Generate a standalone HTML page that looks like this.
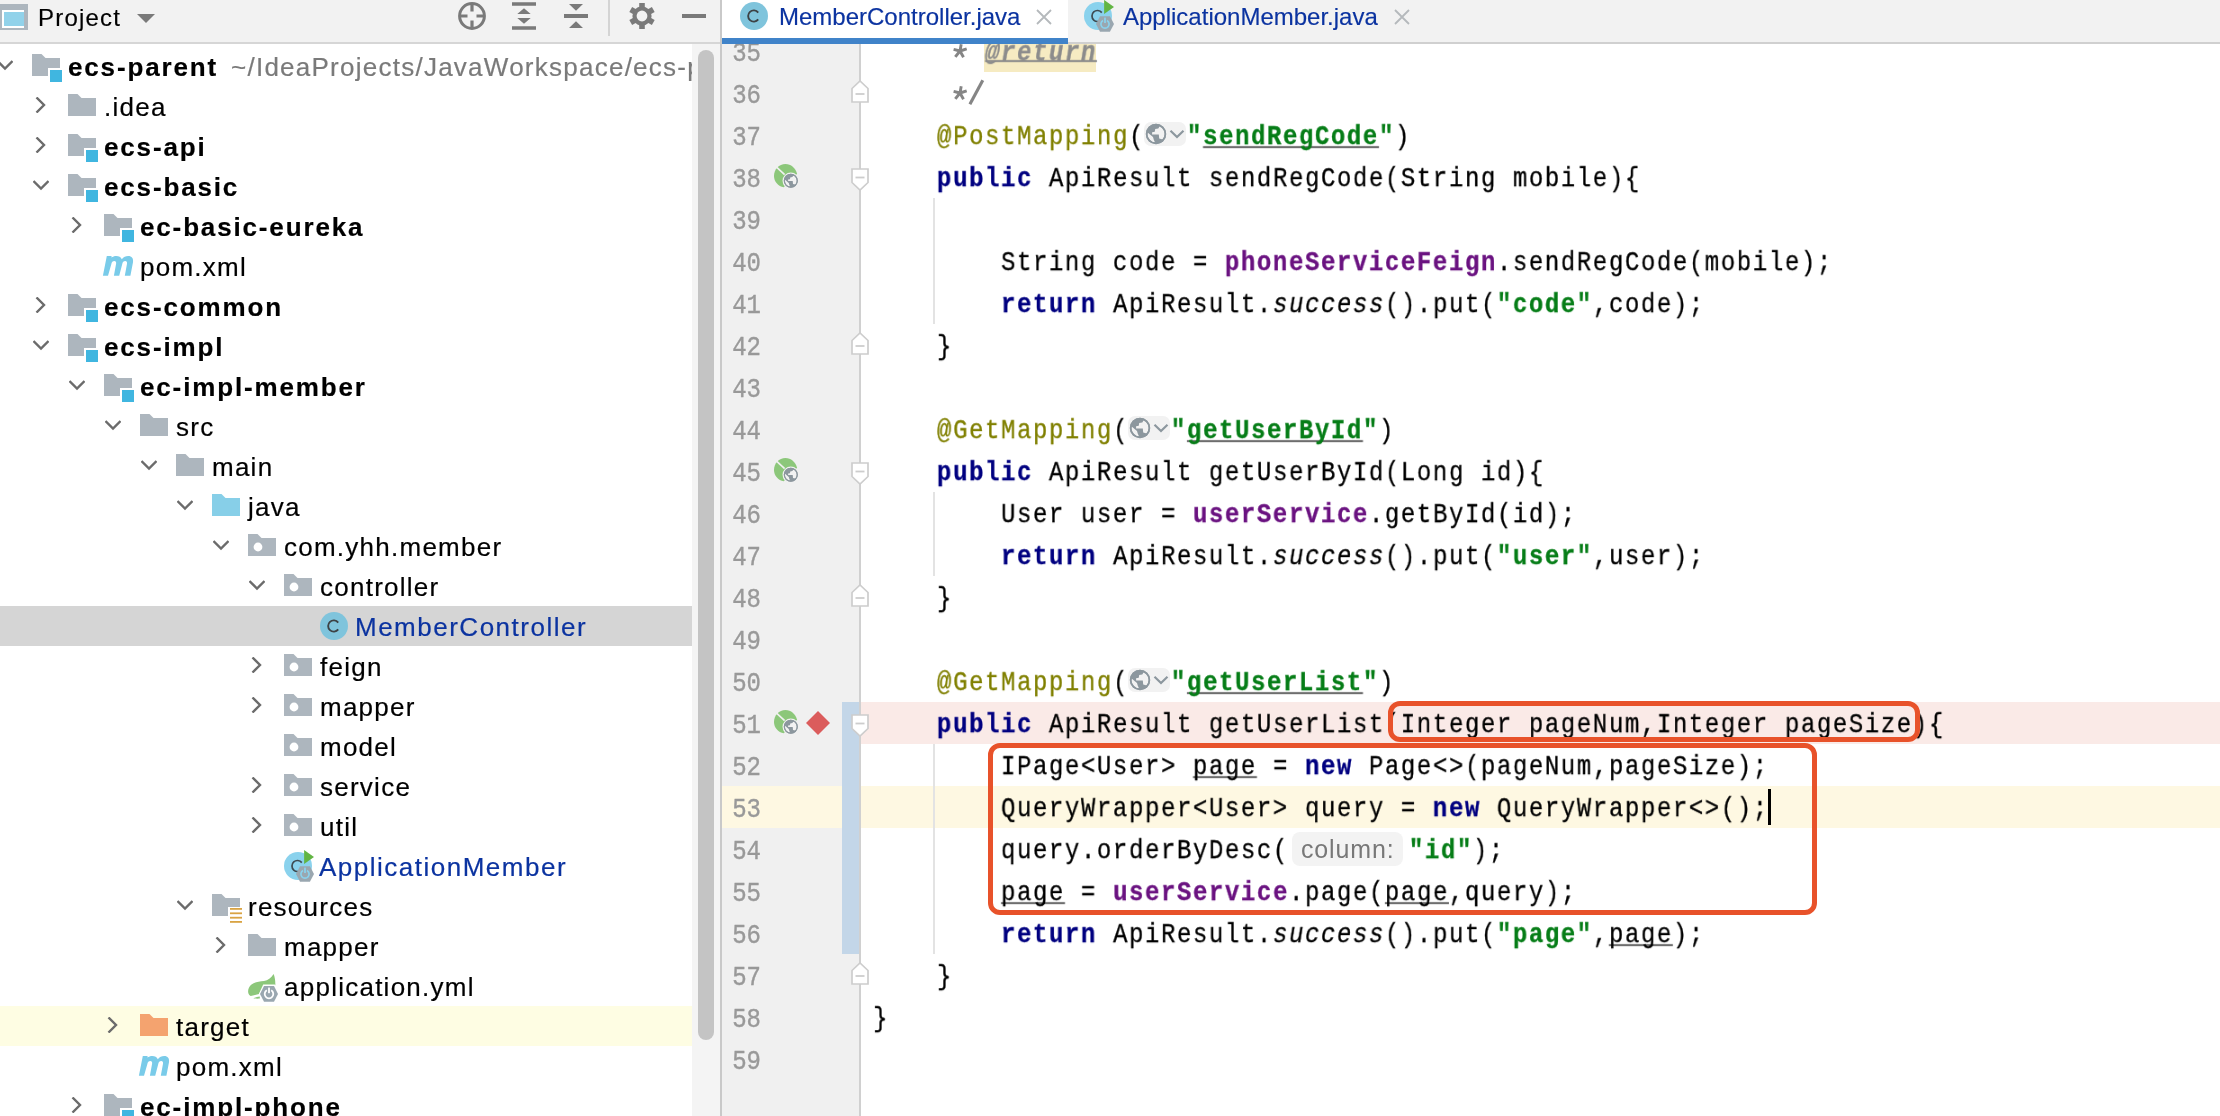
<!DOCTYPE html>
<html><head><meta charset="utf-8"><style>
html,body{margin:0;padding:0;width:2220px;height:1116px;overflow:hidden;background:#fff}
body{position:relative;font-family:"Liberation Sans",sans-serif}
b{font-weight:bold}
</style></head><body>

<svg width="0" height="0" style="position:absolute">
<defs>
<symbol id="folder" viewBox="0 0 28 28"><path d="M0 2H9.5L13.5 6H28V24H0Z" fill="#adb6be"/></symbol>
<symbol id="module" viewBox="0 0 28 28" overflow="visible"><path d="M0 2H9.5L13.5 6H28V16H16V24H0Z" fill="#adb6be"/><rect x="18" y="18" width="12" height="12" fill="#40b6e0"/></symbol>
<symbol id="pkg" viewBox="0 0 28 28"><path d="M0 2H9.5L13.5 6H28V24H0Z" fill="#adb6be"/><circle cx="10" cy="15" r="4.4" fill="#fff"/></symbol>
<symbol id="srcf" viewBox="0 0 28 28"><path d="M0 2H9.5L13.5 6H28V24H0Z" fill="#87cfe8"/></symbol>
<symbol id="tgt" viewBox="0 0 28 28"><path d="M0 2H9.5L13.5 6H28V24H0Z" fill="#f4a36f"/></symbol>
<symbol id="res" viewBox="0 0 28 28" overflow="visible"><path d="M0 2H9.5L13.5 6H28V15H16V24H0Z" fill="#adb6be"/><g fill="#d9a343"><rect x="18" y="16" width="12" height="1.8"/><rect x="18" y="20.4" width="12" height="1.8"/><rect x="18" y="24.8" width="12" height="1.8"/><rect x="18" y="29" width="12" height="1.8"/></g></symbol>
<symbol id="pom" viewBox="0 0 28 28" overflow="visible"><path d="M-1.1 23.8L2.8 4H7.6L7.4 5.6C8.8 4.6 10.4 4 12.2 4C15 4 16.8 5 17.8 7.2C19.6 5 21.6 4 24.2 4C27.8 4 29.6 6.4 29 10.2L26.4 23.8H20.8L23 11.8C23.3 10 22.6 9 21.2 9C19.6 9 18.6 10.2 18.2 12.2L15.2 23.8H9.9L12.1 11.8C12.4 10 11.7 9 10.3 9C8.7 9 7.7 10.2 7.3 12.2L4 23.8Z" fill="#79cbe9"/></symbol>
<symbol id="cls" viewBox="0 0 28 28"><circle cx="14" cy="14" r="14" fill="#7fc4dc"/><path d="M18.2 10.6A5.6 5.6 0 1 0 18.2 17.4" fill="none" stroke="#3d4245" stroke-width="1.9"/></symbol>
<symbol id="app" viewBox="0 0 28 28" overflow="visible"><circle cx="14" cy="14" r="14" fill="#8ad2ed"/><path d="M17.8 10.6A5.5 5.5 0 1 0 17.8 17.4" fill="none" stroke="#3e4b52" stroke-width="1.7"/><path d="M20.1 -2.1L30 5.1L20.1 11.9Z" fill="#62b543"/><path d="M16 14.2H25.9L30 22L25.9 29.8H16L12 22Z" fill="#9aa7b0"/><path d="M19 18.5A4.1 4.1 0 1 0 23 18.5" fill="none" stroke="#8ad2ed" stroke-width="1.7"/><rect x="20.1" y="15.6" width="1.8" height="5.4" fill="#8ad2ed"/></symbol>
<symbol id="yml" viewBox="0 0 28 28" overflow="visible"><path d="M25.6 2.1C23 6 20 8.6 16 9C11 9.6 6.7 10 3.5 12.5C0.8 14.6 -0.2 17.6 0.2 20.6C0.5 22.5 1.5 23.8 2.8 24.1L11 22L16 13.5L27.3 13.3C27.5 9 26.8 5 25.6 2.1Z" fill="#8cc77a"/><path d="M5.3 26.2C7.5 25.2 9.5 24.6 11.8 24.4L11.8 26.6C9.6 26.8 7.4 26.7 5.3 26.2Z" fill="#8cc77a"/><path d="M15.2 12.6H26.8L31.2 22L26.8 31.2H15.2L10.8 22Z" fill="#fff"/><path d="M16 14H26L30 22L26 29.8H16L12 22Z" fill="#9aa7b0"/><path d="M18.8 18.3A4.3 4.3 0 1 0 23.2 18.3" fill="none" stroke="#fff" stroke-width="1.8"/><rect x="20.1" y="15.6" width="1.8" height="5.6" fill="#fff"/></symbol>
<symbol id="chevR" viewBox="0 0 16 16"><path d="M4.5 0.5L12 8L4.5 15.5" fill="none" stroke="#6b6b6b" stroke-width="2.4"/></symbol>
<symbol id="chevD" viewBox="0 0 16 16"><path d="M0.5 4L8 11.5L15.5 4" fill="none" stroke="#6b6b6b" stroke-width="2.4"/></symbol>
<symbol id="spring" viewBox="0 0 24 24" overflow="visible"><path d="M23.1 9.8C21.5 4 17 0 11.5 0C5 0 0 5.4 0 12C0 17.6 4 22.3 9.8 23.3L16.8 16.8Z" fill="#8cc77a"/><path d="M2.3 2.8L10.6 10.6" stroke="#f0f0f0" stroke-width="1.7"/><circle cx="16.8" cy="16.8" r="8.3" fill="#f0f0f0"/><use href="#globe" x="8.55" y="8.55" width="16.5" height="16.5"/></symbol>
<clipPath id="gclip"><circle cx="0" cy="0" r="8.6"/></clipPath>
<symbol id="globe" viewBox="0 0 24 24"><circle cx="12" cy="12" r="10.2" fill="#8c979e"/><g clip-path="url(#gclip)" fill="#f2f2f2" transform="translate(12 12)"><path d="M3.8 -10L12 -10L12 5.8L6.8 5.4L3.2 4.6L2.8 0.45L-3.9 0.45L-3.9 -1.8L-1.25 -2.2L-0.8 -4.9L2.3 -5.4L3.5 -7.4Z"/><path d="M-8.4 -1.6L-3 3.1L-2.2 5.8L-0.8 8.8L-5.7 8.2L-9.5 3.1Z"/></g><circle cx="12" cy="12" r="9.4" fill="none" stroke="#8c979e" stroke-width="1.6"/></symbol>
</defs>
</svg>

<div style="position:absolute;left:0;top:0;width:720px;height:1116px;background:#fff;overflow:hidden"><div style="position:absolute;left:0;top:606px;width:692px;height:40px;background:#d5d5d5"></div><div style="position:absolute;left:0;top:1006px;width:692px;height:40px;background:#fefde3"></div><svg style="position:absolute;left:-3.5px;top:57px;overflow:visible" width="16" height="16"><use href="#chevD" width="16" height="16"/></svg><svg style="position:absolute;left:32px;top:52px;overflow:visible" width="28" height="28"><use href="#module" width="28" height="28"/></svg><div style="position:absolute;left:69px;top:47px;height:40px;line-height:40px;font-size:26px;white-space:nowrap;will-change:transform;-webkit-text-stroke-width:0.2px;font-weight:bold;color:#000;letter-spacing:1.85px;margin-left:-1px">ecs-parent<span style="font-weight:normal;color:#7a7a7a;letter-spacing:1.25px;margin-left:13px">~/IdeaProjects/JavaWorkspace/ecs-parent</span></div><svg style="position:absolute;left:31.5px;top:97px;overflow:visible" width="16" height="16"><use href="#chevR" width="16" height="16"/></svg><svg style="position:absolute;left:68px;top:92px;overflow:visible" width="28" height="28"><use href="#folder" width="28" height="28"/></svg><div style="position:absolute;left:105px;top:87px;height:40px;line-height:40px;font-size:26px;white-space:nowrap;will-change:transform;-webkit-text-stroke-width:0.2px;color:#000;letter-spacing:1.25px;margin-left:-1px">.idea</div><svg style="position:absolute;left:31.5px;top:137px;overflow:visible" width="16" height="16"><use href="#chevR" width="16" height="16"/></svg><svg style="position:absolute;left:68px;top:132px;overflow:visible" width="28" height="28"><use href="#module" width="28" height="28"/></svg><div style="position:absolute;left:105px;top:127px;height:40px;line-height:40px;font-size:26px;white-space:nowrap;will-change:transform;-webkit-text-stroke-width:0.2px;font-weight:bold;color:#000;letter-spacing:1.85px;margin-left:-1px">ecs-api</div><svg style="position:absolute;left:32.5px;top:177px;overflow:visible" width="16" height="16"><use href="#chevD" width="16" height="16"/></svg><svg style="position:absolute;left:68px;top:172px;overflow:visible" width="28" height="28"><use href="#module" width="28" height="28"/></svg><div style="position:absolute;left:105px;top:167px;height:40px;line-height:40px;font-size:26px;white-space:nowrap;will-change:transform;-webkit-text-stroke-width:0.2px;font-weight:bold;color:#000;letter-spacing:1.85px;margin-left:-1px">ecs-basic</div><svg style="position:absolute;left:67.5px;top:217px;overflow:visible" width="16" height="16"><use href="#chevR" width="16" height="16"/></svg><svg style="position:absolute;left:104px;top:212px;overflow:visible" width="28" height="28"><use href="#module" width="28" height="28"/></svg><div style="position:absolute;left:141px;top:207px;height:40px;line-height:40px;font-size:26px;white-space:nowrap;will-change:transform;-webkit-text-stroke-width:0.2px;font-weight:bold;color:#000;letter-spacing:1.85px;margin-left:-1px">ec-basic-eureka</div><svg style="position:absolute;left:104px;top:252px;overflow:visible" width="28" height="28"><use href="#pom" width="28" height="28"/></svg><div style="position:absolute;left:141px;top:247px;height:40px;line-height:40px;font-size:26px;white-space:nowrap;will-change:transform;-webkit-text-stroke-width:0.2px;color:#000;letter-spacing:1.25px;margin-left:-1px">pom.xml</div><svg style="position:absolute;left:31.5px;top:297px;overflow:visible" width="16" height="16"><use href="#chevR" width="16" height="16"/></svg><svg style="position:absolute;left:68px;top:292px;overflow:visible" width="28" height="28"><use href="#module" width="28" height="28"/></svg><div style="position:absolute;left:105px;top:287px;height:40px;line-height:40px;font-size:26px;white-space:nowrap;will-change:transform;-webkit-text-stroke-width:0.2px;font-weight:bold;color:#000;letter-spacing:1.85px;margin-left:-1px">ecs-common</div><svg style="position:absolute;left:32.5px;top:337px;overflow:visible" width="16" height="16"><use href="#chevD" width="16" height="16"/></svg><svg style="position:absolute;left:68px;top:332px;overflow:visible" width="28" height="28"><use href="#module" width="28" height="28"/></svg><div style="position:absolute;left:105px;top:327px;height:40px;line-height:40px;font-size:26px;white-space:nowrap;will-change:transform;-webkit-text-stroke-width:0.2px;font-weight:bold;color:#000;letter-spacing:1.85px;margin-left:-1px">ecs-impl</div><svg style="position:absolute;left:68.5px;top:377px;overflow:visible" width="16" height="16"><use href="#chevD" width="16" height="16"/></svg><svg style="position:absolute;left:104px;top:372px;overflow:visible" width="28" height="28"><use href="#module" width="28" height="28"/></svg><div style="position:absolute;left:141px;top:367px;height:40px;line-height:40px;font-size:26px;white-space:nowrap;will-change:transform;-webkit-text-stroke-width:0.2px;font-weight:bold;color:#000;letter-spacing:1.85px;margin-left:-1px">ec-impl-member</div><svg style="position:absolute;left:104.5px;top:417px;overflow:visible" width="16" height="16"><use href="#chevD" width="16" height="16"/></svg><svg style="position:absolute;left:140px;top:412px;overflow:visible" width="28" height="28"><use href="#folder" width="28" height="28"/></svg><div style="position:absolute;left:177px;top:407px;height:40px;line-height:40px;font-size:26px;white-space:nowrap;will-change:transform;-webkit-text-stroke-width:0.2px;color:#000;letter-spacing:1.25px;margin-left:-1px">src</div><svg style="position:absolute;left:140.5px;top:457px;overflow:visible" width="16" height="16"><use href="#chevD" width="16" height="16"/></svg><svg style="position:absolute;left:176px;top:452px;overflow:visible" width="28" height="28"><use href="#folder" width="28" height="28"/></svg><div style="position:absolute;left:213px;top:447px;height:40px;line-height:40px;font-size:26px;white-space:nowrap;will-change:transform;-webkit-text-stroke-width:0.2px;color:#000;letter-spacing:1.25px;margin-left:-1px">main</div><svg style="position:absolute;left:176.5px;top:497px;overflow:visible" width="16" height="16"><use href="#chevD" width="16" height="16"/></svg><svg style="position:absolute;left:212px;top:492px;overflow:visible" width="28" height="28"><use href="#srcf" width="28" height="28"/></svg><div style="position:absolute;left:249px;top:487px;height:40px;line-height:40px;font-size:26px;white-space:nowrap;will-change:transform;-webkit-text-stroke-width:0.2px;color:#000;letter-spacing:1.25px;margin-left:-1px">java</div><svg style="position:absolute;left:212.5px;top:537px;overflow:visible" width="16" height="16"><use href="#chevD" width="16" height="16"/></svg><svg style="position:absolute;left:248px;top:532px;overflow:visible" width="28" height="28"><use href="#pkg" width="28" height="28"/></svg><div style="position:absolute;left:285px;top:527px;height:40px;line-height:40px;font-size:26px;white-space:nowrap;will-change:transform;-webkit-text-stroke-width:0.2px;color:#000;letter-spacing:1.25px;margin-left:-1px">com.yhh.member</div><svg style="position:absolute;left:248.5px;top:577px;overflow:visible" width="16" height="16"><use href="#chevD" width="16" height="16"/></svg><svg style="position:absolute;left:284px;top:572px;overflow:visible" width="28" height="28"><use href="#pkg" width="28" height="28"/></svg><div style="position:absolute;left:321px;top:567px;height:40px;line-height:40px;font-size:26px;white-space:nowrap;will-change:transform;-webkit-text-stroke-width:0.2px;color:#000;letter-spacing:1.25px;margin-left:-1px">controller</div><svg style="position:absolute;left:320px;top:612px;overflow:visible" width="28" height="28"><use href="#cls" width="28" height="28"/></svg><div style="position:absolute;left:357px;top:607px;height:40px;line-height:40px;font-size:26px;white-space:nowrap;will-change:transform;-webkit-text-stroke-width:0.2px;color:#0b33a0;letter-spacing:1.5px;margin-left:-2px">MemberController</div><svg style="position:absolute;left:247.5px;top:657px;overflow:visible" width="16" height="16"><use href="#chevR" width="16" height="16"/></svg><svg style="position:absolute;left:284px;top:652px;overflow:visible" width="28" height="28"><use href="#pkg" width="28" height="28"/></svg><div style="position:absolute;left:321px;top:647px;height:40px;line-height:40px;font-size:26px;white-space:nowrap;will-change:transform;-webkit-text-stroke-width:0.2px;color:#000;letter-spacing:1.25px;margin-left:-1px">feign</div><svg style="position:absolute;left:247.5px;top:697px;overflow:visible" width="16" height="16"><use href="#chevR" width="16" height="16"/></svg><svg style="position:absolute;left:284px;top:692px;overflow:visible" width="28" height="28"><use href="#pkg" width="28" height="28"/></svg><div style="position:absolute;left:321px;top:687px;height:40px;line-height:40px;font-size:26px;white-space:nowrap;will-change:transform;-webkit-text-stroke-width:0.2px;color:#000;letter-spacing:1.25px;margin-left:-1px">mapper</div><svg style="position:absolute;left:284px;top:732px;overflow:visible" width="28" height="28"><use href="#pkg" width="28" height="28"/></svg><div style="position:absolute;left:321px;top:727px;height:40px;line-height:40px;font-size:26px;white-space:nowrap;will-change:transform;-webkit-text-stroke-width:0.2px;color:#000;letter-spacing:1.25px;margin-left:-1px">model</div><svg style="position:absolute;left:247.5px;top:777px;overflow:visible" width="16" height="16"><use href="#chevR" width="16" height="16"/></svg><svg style="position:absolute;left:284px;top:772px;overflow:visible" width="28" height="28"><use href="#pkg" width="28" height="28"/></svg><div style="position:absolute;left:321px;top:767px;height:40px;line-height:40px;font-size:26px;white-space:nowrap;will-change:transform;-webkit-text-stroke-width:0.2px;color:#000;letter-spacing:1.25px;margin-left:-1px">service</div><svg style="position:absolute;left:247.5px;top:817px;overflow:visible" width="16" height="16"><use href="#chevR" width="16" height="16"/></svg><svg style="position:absolute;left:284px;top:812px;overflow:visible" width="28" height="28"><use href="#pkg" width="28" height="28"/></svg><div style="position:absolute;left:321px;top:807px;height:40px;line-height:40px;font-size:26px;white-space:nowrap;will-change:transform;-webkit-text-stroke-width:0.2px;color:#000;letter-spacing:1.25px;margin-left:-1px">util</div><svg style="position:absolute;left:284px;top:852px;overflow:visible" width="28" height="28"><use href="#app" width="28" height="28"/></svg><div style="position:absolute;left:321px;top:847px;height:40px;line-height:40px;font-size:26px;white-space:nowrap;will-change:transform;-webkit-text-stroke-width:0.2px;color:#0b33a0;letter-spacing:1.5px;margin-left:-2px">ApplicationMember</div><svg style="position:absolute;left:176.5px;top:897px;overflow:visible" width="16" height="16"><use href="#chevD" width="16" height="16"/></svg><svg style="position:absolute;left:212px;top:892px;overflow:visible" width="28" height="28"><use href="#res" width="28" height="28"/></svg><div style="position:absolute;left:249px;top:887px;height:40px;line-height:40px;font-size:26px;white-space:nowrap;will-change:transform;-webkit-text-stroke-width:0.2px;color:#000;letter-spacing:1.25px;margin-left:-1px">resources</div><svg style="position:absolute;left:211.5px;top:937px;overflow:visible" width="16" height="16"><use href="#chevR" width="16" height="16"/></svg><svg style="position:absolute;left:248px;top:932px;overflow:visible" width="28" height="28"><use href="#folder" width="28" height="28"/></svg><div style="position:absolute;left:285px;top:927px;height:40px;line-height:40px;font-size:26px;white-space:nowrap;will-change:transform;-webkit-text-stroke-width:0.2px;color:#000;letter-spacing:1.25px;margin-left:-1px">mapper</div><svg style="position:absolute;left:248px;top:972px;overflow:visible" width="28" height="28"><use href="#yml" width="28" height="28"/></svg><div style="position:absolute;left:285px;top:967px;height:40px;line-height:40px;font-size:26px;white-space:nowrap;will-change:transform;-webkit-text-stroke-width:0.2px;color:#000;letter-spacing:1.25px;margin-left:-1px">application.yml</div><svg style="position:absolute;left:103.5px;top:1017px;overflow:visible" width="16" height="16"><use href="#chevR" width="16" height="16"/></svg><svg style="position:absolute;left:140px;top:1012px;overflow:visible" width="28" height="28"><use href="#tgt" width="28" height="28"/></svg><div style="position:absolute;left:177px;top:1007px;height:40px;line-height:40px;font-size:26px;white-space:nowrap;will-change:transform;-webkit-text-stroke-width:0.2px;color:#000;letter-spacing:1.25px;margin-left:-1px">target</div><svg style="position:absolute;left:140px;top:1052px;overflow:visible" width="28" height="28"><use href="#pom" width="28" height="28"/></svg><div style="position:absolute;left:177px;top:1047px;height:40px;line-height:40px;font-size:26px;white-space:nowrap;will-change:transform;-webkit-text-stroke-width:0.2px;color:#000;letter-spacing:1.25px;margin-left:-1px">pom.xml</div><svg style="position:absolute;left:67.5px;top:1097px;overflow:visible" width="16" height="16"><use href="#chevR" width="16" height="16"/></svg><svg style="position:absolute;left:104px;top:1092px;overflow:visible" width="28" height="28"><use href="#module" width="28" height="28"/></svg><div style="position:absolute;left:141px;top:1087px;height:40px;line-height:40px;font-size:26px;white-space:nowrap;will-change:transform;-webkit-text-stroke-width:0.2px;font-weight:bold;color:#000;letter-spacing:1.85px;margin-left:-1px">ec-impl-phone</div><div style="position:absolute;left:692px;top:44px;width:28px;height:1072px;background:#f4f4f4"></div><div style="position:absolute;left:698px;top:50px;width:16px;height:990px;background:#c4c4c4;border-radius:8px"></div><div style="position:absolute;left:0;top:0;width:720px;height:42px;background:#f2f2f2;border-bottom:2px solid #d6d6d6"></div><div style="position:absolute;left:0;top:4px;width:28px;height:26px;background:#adb6be"></div><div style="position:absolute;left:2px;top:10px;width:22px;height:18px;background:#fff"></div><div style="position:absolute;left:4px;top:12px;width:20px;height:14px;background:#91d2ea"></div><div style="position:absolute;left:38px;top:0;height:36px;line-height:36px;font-size:24px;color:#000;letter-spacing:1.2px;will-change:transform;-webkit-text-stroke-width:0.15px">Project</div><svg style="position:absolute;left:0;top:0" width="720" height="42"><path d="M137 14H155L146 23Z" fill="#7a7a7a"/><circle cx="472" cy="16" r="12.4" fill="none" stroke="#7a7a7a" stroke-width="3"/><path d="M472 3V11.5M472 20.5V29M459 16H467.5M476.5 16H485" stroke="#7a7a7a" stroke-width="3.2"/><path d="M512 4H536M512 28H536" stroke="#7a7a7a" stroke-width="3.6"/><path d="M517.3 14H530.7L524 8.2Z M517.3 18H530.7L524 23.8Z" fill="#7a7a7a"/><path d="M564 16H588" stroke="#7a7a7a" stroke-width="4"/><path d="M569 4H583L576 10.8Z M569 28H583L576 21.2Z" fill="#7a7a7a"/><rect x="608" y="0" width="2" height="36" fill="#d4d4d4"/><g fill="#7a7a7a" transform="translate(642 16)"><rect x="-2.8" y="-13" width="5.6" height="26"/><rect x="-2.8" y="-13" width="5.6" height="26" transform="rotate(60)"/><rect x="-2.8" y="-13" width="5.6" height="26" transform="rotate(120)"/><circle r="9.6"/></g><circle cx="642" cy="16" r="5.4" fill="#f2f2f2"/><path d="M682 16H706" stroke="#7a7a7a" stroke-width="4"/></svg></div><div style="position:absolute;left:720px;top:0;width:2px;height:1116px;background:#c9c9c9"></div>
<div style="position:absolute;left:722px;top:0;width:1498px;height:1116px;background:#fff;overflow:hidden"><div style="position:absolute;left:0;top:0;width:138px;height:1116px;background:#f0f0f0"></div><div style="position:absolute;left:139px;top:702px;width:1400px;height:42px;background:#faeae7"></div><div style="position:absolute;left:139px;top:786px;width:1400px;height:42px;background:#fef8e2"></div><div style="position:absolute;left:0;top:786px;width:120px;height:42px;background:#fef8e2"></div><div style="position:absolute;left:120px;top:702px;width:18px;height:252px;background:#c3d6e8"></div><div style="position:absolute;left:137px;top:0;width:2px;height:1116px;background:#d0d0d0"></div><div style="position:absolute;left:0;top:34px;width:39px;height:42px;line-height:42px;text-align:right;font-family:'Liberation Mono';font-size:24px;color:#999999;transform:scaleY(1.14);transform-origin:0 28px;will-change:transform;-webkit-text-stroke-width:0.35px">35</div><div style="position:absolute;left:0;top:76px;width:39px;height:42px;line-height:42px;text-align:right;font-family:'Liberation Mono';font-size:24px;color:#999999;transform:scaleY(1.14);transform-origin:0 28px;will-change:transform;-webkit-text-stroke-width:0.35px">36</div><div style="position:absolute;left:0;top:118px;width:39px;height:42px;line-height:42px;text-align:right;font-family:'Liberation Mono';font-size:24px;color:#999999;transform:scaleY(1.14);transform-origin:0 28px;will-change:transform;-webkit-text-stroke-width:0.35px">37</div><div style="position:absolute;left:0;top:160px;width:39px;height:42px;line-height:42px;text-align:right;font-family:'Liberation Mono';font-size:24px;color:#999999;transform:scaleY(1.14);transform-origin:0 28px;will-change:transform;-webkit-text-stroke-width:0.35px">38</div><div style="position:absolute;left:0;top:202px;width:39px;height:42px;line-height:42px;text-align:right;font-family:'Liberation Mono';font-size:24px;color:#999999;transform:scaleY(1.14);transform-origin:0 28px;will-change:transform;-webkit-text-stroke-width:0.35px">39</div><div style="position:absolute;left:0;top:244px;width:39px;height:42px;line-height:42px;text-align:right;font-family:'Liberation Mono';font-size:24px;color:#999999;transform:scaleY(1.14);transform-origin:0 28px;will-change:transform;-webkit-text-stroke-width:0.35px">40</div><div style="position:absolute;left:0;top:286px;width:39px;height:42px;line-height:42px;text-align:right;font-family:'Liberation Mono';font-size:24px;color:#999999;transform:scaleY(1.14);transform-origin:0 28px;will-change:transform;-webkit-text-stroke-width:0.35px">41</div><div style="position:absolute;left:0;top:328px;width:39px;height:42px;line-height:42px;text-align:right;font-family:'Liberation Mono';font-size:24px;color:#999999;transform:scaleY(1.14);transform-origin:0 28px;will-change:transform;-webkit-text-stroke-width:0.35px">42</div><div style="position:absolute;left:0;top:370px;width:39px;height:42px;line-height:42px;text-align:right;font-family:'Liberation Mono';font-size:24px;color:#999999;transform:scaleY(1.14);transform-origin:0 28px;will-change:transform;-webkit-text-stroke-width:0.35px">43</div><div style="position:absolute;left:0;top:412px;width:39px;height:42px;line-height:42px;text-align:right;font-family:'Liberation Mono';font-size:24px;color:#999999;transform:scaleY(1.14);transform-origin:0 28px;will-change:transform;-webkit-text-stroke-width:0.35px">44</div><div style="position:absolute;left:0;top:454px;width:39px;height:42px;line-height:42px;text-align:right;font-family:'Liberation Mono';font-size:24px;color:#999999;transform:scaleY(1.14);transform-origin:0 28px;will-change:transform;-webkit-text-stroke-width:0.35px">45</div><div style="position:absolute;left:0;top:496px;width:39px;height:42px;line-height:42px;text-align:right;font-family:'Liberation Mono';font-size:24px;color:#999999;transform:scaleY(1.14);transform-origin:0 28px;will-change:transform;-webkit-text-stroke-width:0.35px">46</div><div style="position:absolute;left:0;top:538px;width:39px;height:42px;line-height:42px;text-align:right;font-family:'Liberation Mono';font-size:24px;color:#999999;transform:scaleY(1.14);transform-origin:0 28px;will-change:transform;-webkit-text-stroke-width:0.35px">47</div><div style="position:absolute;left:0;top:580px;width:39px;height:42px;line-height:42px;text-align:right;font-family:'Liberation Mono';font-size:24px;color:#999999;transform:scaleY(1.14);transform-origin:0 28px;will-change:transform;-webkit-text-stroke-width:0.35px">48</div><div style="position:absolute;left:0;top:622px;width:39px;height:42px;line-height:42px;text-align:right;font-family:'Liberation Mono';font-size:24px;color:#999999;transform:scaleY(1.14);transform-origin:0 28px;will-change:transform;-webkit-text-stroke-width:0.35px">49</div><div style="position:absolute;left:0;top:664px;width:39px;height:42px;line-height:42px;text-align:right;font-family:'Liberation Mono';font-size:24px;color:#999999;transform:scaleY(1.14);transform-origin:0 28px;will-change:transform;-webkit-text-stroke-width:0.35px">50</div><div style="position:absolute;left:0;top:706px;width:39px;height:42px;line-height:42px;text-align:right;font-family:'Liberation Mono';font-size:24px;color:#999999;transform:scaleY(1.14);transform-origin:0 28px;will-change:transform;-webkit-text-stroke-width:0.35px">51</div><div style="position:absolute;left:0;top:748px;width:39px;height:42px;line-height:42px;text-align:right;font-family:'Liberation Mono';font-size:24px;color:#999999;transform:scaleY(1.14);transform-origin:0 28px;will-change:transform;-webkit-text-stroke-width:0.35px">52</div><div style="position:absolute;left:0;top:790px;width:39px;height:42px;line-height:42px;text-align:right;font-family:'Liberation Mono';font-size:24px;color:#999999;transform:scaleY(1.14);transform-origin:0 28px;will-change:transform;-webkit-text-stroke-width:0.35px">53</div><div style="position:absolute;left:0;top:832px;width:39px;height:42px;line-height:42px;text-align:right;font-family:'Liberation Mono';font-size:24px;color:#999999;transform:scaleY(1.14);transform-origin:0 28px;will-change:transform;-webkit-text-stroke-width:0.35px">54</div><div style="position:absolute;left:0;top:874px;width:39px;height:42px;line-height:42px;text-align:right;font-family:'Liberation Mono';font-size:24px;color:#999999;transform:scaleY(1.14);transform-origin:0 28px;will-change:transform;-webkit-text-stroke-width:0.35px">55</div><div style="position:absolute;left:0;top:916px;width:39px;height:42px;line-height:42px;text-align:right;font-family:'Liberation Mono';font-size:24px;color:#999999;transform:scaleY(1.14);transform-origin:0 28px;will-change:transform;-webkit-text-stroke-width:0.35px">56</div><div style="position:absolute;left:0;top:958px;width:39px;height:42px;line-height:42px;text-align:right;font-family:'Liberation Mono';font-size:24px;color:#999999;transform:scaleY(1.14);transform-origin:0 28px;will-change:transform;-webkit-text-stroke-width:0.35px">57</div><div style="position:absolute;left:0;top:1000px;width:39px;height:42px;line-height:42px;text-align:right;font-family:'Liberation Mono';font-size:24px;color:#999999;transform:scaleY(1.14);transform-origin:0 28px;will-change:transform;-webkit-text-stroke-width:0.35px">58</div><div style="position:absolute;left:0;top:1042px;width:39px;height:42px;line-height:42px;text-align:right;font-family:'Liberation Mono';font-size:24px;color:#999999;transform:scaleY(1.14);transform-origin:0 28px;will-change:transform;-webkit-text-stroke-width:0.35px">59</div><div style="position:absolute;left:262px;top:30px;width:112px;height:42px;background:#f6ebc2"></div><div style="position:absolute;left:422px;top:122px;width:42px;height:24px;background:#f2f2f2;border-radius:7px"></div><svg style="position:absolute;left:422px;top:122px" width="42" height="24"><g transform="translate(12 12)"><use href="#globe" x="-12" y="-12" width="24" height="24"/></g><path d="M26.5 8.8L33 15L39.5 8.8" fill="none" stroke="#8c979e" stroke-width="2.2"/></svg><div style="position:absolute;left:406px;top:416px;width:42px;height:24px;background:#f2f2f2;border-radius:7px"></div><svg style="position:absolute;left:406px;top:416px" width="42" height="24"><g transform="translate(12 12)"><use href="#globe" x="-12" y="-12" width="24" height="24"/></g><path d="M26.5 8.8L33 15L39.5 8.8" fill="none" stroke="#8c979e" stroke-width="2.2"/></svg><div style="position:absolute;left:406px;top:668px;width:42px;height:24px;background:#f2f2f2;border-radius:7px"></div><svg style="position:absolute;left:406px;top:668px" width="42" height="24"><g transform="translate(12 12)"><use href="#globe" x="-12" y="-12" width="24" height="24"/></g><path d="M26.5 8.8L33 15L39.5 8.8" fill="none" stroke="#8c979e" stroke-width="2.2"/></svg><div style="position:absolute;left:570px;top:832px;width:111px;height:34px;background:#f3f3f3;border-radius:8px"></div><div style="position:absolute;left:579px;top:832px;height:34px;line-height:34px;font-family:'Liberation Sans';font-size:25px;letter-spacing:0.85px;color:#787878;will-change:transform">column:</div><svg style="position:absolute;left:238px;top:76px" width="30" height="34"><path d="M22.8 4.2L9.9 28.3" stroke="#858585" stroke-width="3.1"/></svg><svg style="position:absolute;left:227.79999999999995px;top:40.5px" width="20" height="20"><g transform="translate(10 10)" stroke="#858585" stroke-width="2.9" stroke-linecap="butt" fill="none"><path d="M0 0L1.2 -6.8M0 0L-6.4 -1.6M0 0L6.7 -2.1M0 0L-4.7 5.9M0 0L3.5 6.2"/></g></svg><svg style="position:absolute;left:227.79999999999995px;top:82.5px" width="20" height="20"><g transform="translate(10 10)" stroke="#858585" stroke-width="2.9" stroke-linecap="butt" fill="none"><path d="M0 0L1.2 -6.8M0 0L-6.4 -1.6M0 0L6.7 -2.1M0 0L-4.7 5.9M0 0L3.5 6.2"/></g></svg><div style="position:absolute;left:211px;top:198px;width:2px;height:126px;background:#e3e3e3"></div><div style="position:absolute;left:211px;top:492px;width:2px;height:84px;background:#e3e3e3"></div><div style="position:absolute;left:211px;top:744px;width:2px;height:210px;background:#e3e3e3"></div><div style="position:absolute;left:150.79999999999995px;top:32px;height:42px;line-height:42px;font-family:'Liberation Mono';font-size:26.667px;letter-spacing:1.778px;color:#000;white-space:pre;transform:scale(0.9,1.03);transform-origin:0 28px;will-change:transform;-webkit-text-stroke-width:0.3px">     <i style="color:#8c8c8c">  <b style="text-decoration:underline;text-decoration-thickness:2px;text-underline-offset:0px;text-decoration-skip-ink:none">@return</b></i></div><div style="position:absolute;left:150.79999999999995px;top:74px;height:42px;line-height:42px;font-family:'Liberation Mono';font-size:26.667px;letter-spacing:1.778px;color:#000;white-space:pre;transform:scale(0.9,1.03);transform-origin:0 28px;will-change:transform;-webkit-text-stroke-width:0.3px"></div><div style="position:absolute;left:150.79999999999995px;top:116px;height:42px;line-height:42px;font-family:'Liberation Mono';font-size:26.667px;letter-spacing:1.778px;color:#000;white-space:pre;transform:scale(0.9,1.03);transform-origin:0 28px;will-change:transform;-webkit-text-stroke-width:0.3px">    <span style="color:#808000">@PostMapping</span>(<span style="display:inline-block;width:46.666666666666664px"></span><b style="color:#067d17">"<span style="text-decoration:underline;text-decoration-color:#6a6a6a;text-decoration-thickness:1.5px;text-underline-offset:2px;text-decoration-skip-ink:none">sendRegCode</span>"</b>)</div><div style="position:absolute;left:150.79999999999995px;top:158px;height:42px;line-height:42px;font-family:'Liberation Mono';font-size:26.667px;letter-spacing:1.778px;color:#000;white-space:pre;transform:scale(0.9,1.03);transform-origin:0 28px;will-change:transform;-webkit-text-stroke-width:0.3px">    <b style="color:#000080">public</b> ApiResult sendRegCode(String mobile){</div><div style="position:absolute;left:150.79999999999995px;top:200px;height:42px;line-height:42px;font-family:'Liberation Mono';font-size:26.667px;letter-spacing:1.778px;color:#000;white-space:pre;transform:scale(0.9,1.03);transform-origin:0 28px;will-change:transform;-webkit-text-stroke-width:0.3px"></div><div style="position:absolute;left:150.79999999999995px;top:242px;height:42px;line-height:42px;font-family:'Liberation Mono';font-size:26.667px;letter-spacing:1.778px;color:#000;white-space:pre;transform:scale(0.9,1.03);transform-origin:0 28px;will-change:transform;-webkit-text-stroke-width:0.3px">        String code = <b style="color:#6a1280">phoneServiceFeign</b>.sendRegCode(mobile);</div><div style="position:absolute;left:150.79999999999995px;top:284px;height:42px;line-height:42px;font-family:'Liberation Mono';font-size:26.667px;letter-spacing:1.778px;color:#000;white-space:pre;transform:scale(0.9,1.03);transform-origin:0 28px;will-change:transform;-webkit-text-stroke-width:0.3px">        <b style="color:#000080">return</b> ApiResult.<i>success</i>().put(<b style="color:#067d17">"code"</b>,code);</div><div style="position:absolute;left:150.79999999999995px;top:326px;height:42px;line-height:42px;font-family:'Liberation Mono';font-size:26.667px;letter-spacing:1.778px;color:#000;white-space:pre;transform:scale(0.9,1.03);transform-origin:0 28px;will-change:transform;-webkit-text-stroke-width:0.3px">    }</div><div style="position:absolute;left:150.79999999999995px;top:368px;height:42px;line-height:42px;font-family:'Liberation Mono';font-size:26.667px;letter-spacing:1.778px;color:#000;white-space:pre;transform:scale(0.9,1.03);transform-origin:0 28px;will-change:transform;-webkit-text-stroke-width:0.3px"></div><div style="position:absolute;left:150.79999999999995px;top:410px;height:42px;line-height:42px;font-family:'Liberation Mono';font-size:26.667px;letter-spacing:1.778px;color:#000;white-space:pre;transform:scale(0.9,1.03);transform-origin:0 28px;will-change:transform;-webkit-text-stroke-width:0.3px">    <span style="color:#808000">@GetMapping</span>(<span style="display:inline-block;width:46.666666666666664px"></span><b style="color:#067d17">"<span style="text-decoration:underline;text-decoration-color:#6a6a6a;text-decoration-thickness:1.5px;text-underline-offset:2px;text-decoration-skip-ink:none">getUserById</span>"</b>)</div><div style="position:absolute;left:150.79999999999995px;top:452px;height:42px;line-height:42px;font-family:'Liberation Mono';font-size:26.667px;letter-spacing:1.778px;color:#000;white-space:pre;transform:scale(0.9,1.03);transform-origin:0 28px;will-change:transform;-webkit-text-stroke-width:0.3px">    <b style="color:#000080">public</b> ApiResult getUserById(Long id){</div><div style="position:absolute;left:150.79999999999995px;top:494px;height:42px;line-height:42px;font-family:'Liberation Mono';font-size:26.667px;letter-spacing:1.778px;color:#000;white-space:pre;transform:scale(0.9,1.03);transform-origin:0 28px;will-change:transform;-webkit-text-stroke-width:0.3px">        User user = <b style="color:#6a1280">userService</b>.getById(id);</div><div style="position:absolute;left:150.79999999999995px;top:536px;height:42px;line-height:42px;font-family:'Liberation Mono';font-size:26.667px;letter-spacing:1.778px;color:#000;white-space:pre;transform:scale(0.9,1.03);transform-origin:0 28px;will-change:transform;-webkit-text-stroke-width:0.3px">        <b style="color:#000080">return</b> ApiResult.<i>success</i>().put(<b style="color:#067d17">"user"</b>,user);</div><div style="position:absolute;left:150.79999999999995px;top:578px;height:42px;line-height:42px;font-family:'Liberation Mono';font-size:26.667px;letter-spacing:1.778px;color:#000;white-space:pre;transform:scale(0.9,1.03);transform-origin:0 28px;will-change:transform;-webkit-text-stroke-width:0.3px">    }</div><div style="position:absolute;left:150.79999999999995px;top:620px;height:42px;line-height:42px;font-family:'Liberation Mono';font-size:26.667px;letter-spacing:1.778px;color:#000;white-space:pre;transform:scale(0.9,1.03);transform-origin:0 28px;will-change:transform;-webkit-text-stroke-width:0.3px"></div><div style="position:absolute;left:150.79999999999995px;top:662px;height:42px;line-height:42px;font-family:'Liberation Mono';font-size:26.667px;letter-spacing:1.778px;color:#000;white-space:pre;transform:scale(0.9,1.03);transform-origin:0 28px;will-change:transform;-webkit-text-stroke-width:0.3px">    <span style="color:#808000">@GetMapping</span>(<span style="display:inline-block;width:46.666666666666664px"></span><b style="color:#067d17">"<span style="text-decoration:underline;text-decoration-color:#6a6a6a;text-decoration-thickness:1.5px;text-underline-offset:2px;text-decoration-skip-ink:none">getUserList</span>"</b>)</div><div style="position:absolute;left:150.79999999999995px;top:704px;height:42px;line-height:42px;font-family:'Liberation Mono';font-size:26.667px;letter-spacing:1.778px;color:#000;white-space:pre;transform:scale(0.9,1.03);transform-origin:0 28px;will-change:transform;-webkit-text-stroke-width:0.3px">    <b style="color:#000080">public</b> ApiResult getUserList(Integer pageNum,Integer pageSize){</div><div style="position:absolute;left:150.79999999999995px;top:746px;height:42px;line-height:42px;font-family:'Liberation Mono';font-size:26.667px;letter-spacing:1.778px;color:#000;white-space:pre;transform:scale(0.9,1.03);transform-origin:0 28px;will-change:transform;-webkit-text-stroke-width:0.3px">        IPage&lt;User&gt; <span style="text-decoration:underline;text-decoration-color:#6a6a6a;text-decoration-thickness:1.5px;text-underline-offset:2px;text-decoration-skip-ink:none">page</span> = <b style="color:#000080">new</b> Page&lt;&gt;(pageNum,pageSize);</div><div style="position:absolute;left:150.79999999999995px;top:788px;height:42px;line-height:42px;font-family:'Liberation Mono';font-size:26.667px;letter-spacing:1.778px;color:#000;white-space:pre;transform:scale(0.9,1.03);transform-origin:0 28px;will-change:transform;-webkit-text-stroke-width:0.3px">        QueryWrapper&lt;User&gt; query = <b style="color:#000080">new</b> QueryWrapper&lt;&gt;();</div><div style="position:absolute;left:150.79999999999995px;top:830px;height:42px;line-height:42px;font-family:'Liberation Mono';font-size:26.667px;letter-spacing:1.778px;color:#000;white-space:pre;transform:scale(0.9,1.03);transform-origin:0 28px;will-change:transform;-webkit-text-stroke-width:0.3px">        query.orderByDesc(<span style="display:inline-block;width:133.33333333333334px"></span><b style="color:#067d17">"id"</b>);</div><div style="position:absolute;left:150.79999999999995px;top:872px;height:42px;line-height:42px;font-family:'Liberation Mono';font-size:26.667px;letter-spacing:1.778px;color:#000;white-space:pre;transform:scale(0.9,1.03);transform-origin:0 28px;will-change:transform;-webkit-text-stroke-width:0.3px">        <span style="text-decoration:underline;text-decoration-color:#6a6a6a;text-decoration-thickness:1.5px;text-underline-offset:2px;text-decoration-skip-ink:none">page</span> = <b style="color:#6a1280">userService</b>.page(<span style="text-decoration:underline;text-decoration-color:#6a6a6a;text-decoration-thickness:1.5px;text-underline-offset:2px;text-decoration-skip-ink:none">page</span>,query);</div><div style="position:absolute;left:150.79999999999995px;top:914px;height:42px;line-height:42px;font-family:'Liberation Mono';font-size:26.667px;letter-spacing:1.778px;color:#000;white-space:pre;transform:scale(0.9,1.03);transform-origin:0 28px;will-change:transform;-webkit-text-stroke-width:0.3px">        <b style="color:#000080">return</b> ApiResult.<i>success</i>().put(<b style="color:#067d17">"page"</b>,<span style="text-decoration:underline;text-decoration-color:#6a6a6a;text-decoration-thickness:1.5px;text-underline-offset:2px;text-decoration-skip-ink:none">page</span>);</div><div style="position:absolute;left:150.79999999999995px;top:956px;height:42px;line-height:42px;font-family:'Liberation Mono';font-size:26.667px;letter-spacing:1.778px;color:#000;white-space:pre;transform:scale(0.9,1.03);transform-origin:0 28px;will-change:transform;-webkit-text-stroke-width:0.3px">    }</div><div style="position:absolute;left:150.79999999999995px;top:998px;height:42px;line-height:42px;font-family:'Liberation Mono';font-size:26.667px;letter-spacing:1.778px;color:#000;white-space:pre;transform:scale(0.9,1.03);transform-origin:0 28px;will-change:transform;-webkit-text-stroke-width:0.3px">}</div><div style="position:absolute;left:150.79999999999995px;top:1040px;height:42px;line-height:42px;font-family:'Liberation Mono';font-size:26.667px;letter-spacing:1.778px;color:#000;white-space:pre;transform:scale(0.9,1.03);transform-origin:0 28px;will-change:transform;-webkit-text-stroke-width:0.3px"></div><div style="position:absolute;left:1046px;top:789px;width:3px;height:36px;background:#000"></div><svg style="position:absolute;left:52px;top:164px;overflow:visible" width="24" height="24"><use href="#spring" width="24" height="24"/></svg><svg style="position:absolute;left:52px;top:458px;overflow:visible" width="24" height="24"><use href="#spring" width="24" height="24"/></svg><svg style="position:absolute;left:52px;top:710px;overflow:visible" width="24" height="24"><use href="#spring" width="24" height="24"/></svg><svg style="position:absolute;left:83px;top:710px" width="26" height="26"><path d="M13 1L25 13L13 25L1 13Z" fill="#db5c5c"/></svg><svg style="position:absolute;left:129px;top:80px" width="18" height="24"><path d="M1 22H17V8.5L9 1L1 8.5Z" fill="#fff" stroke="#cdcdcd" stroke-width="1.7"/><path d="M4.5 14H13.5" stroke="#cdcdcd" stroke-width="1.8"/></svg><svg style="position:absolute;left:129px;top:168px" width="18" height="24"><path d="M1 1H17V14.5L9 22L1 14.5Z" fill="#fff" stroke="#cdcdcd" stroke-width="1.7"/><path d="M4.5 9.5H13.5" stroke="#cdcdcd" stroke-width="1.8"/></svg><svg style="position:absolute;left:129px;top:332px" width="18" height="24"><path d="M1 22H17V8.5L9 1L1 8.5Z" fill="#fff" stroke="#cdcdcd" stroke-width="1.7"/><path d="M4.5 14H13.5" stroke="#cdcdcd" stroke-width="1.8"/></svg><svg style="position:absolute;left:129px;top:462px" width="18" height="24"><path d="M1 1H17V14.5L9 22L1 14.5Z" fill="#fff" stroke="#cdcdcd" stroke-width="1.7"/><path d="M4.5 9.5H13.5" stroke="#cdcdcd" stroke-width="1.8"/></svg><svg style="position:absolute;left:129px;top:584px" width="18" height="24"><path d="M1 22H17V8.5L9 1L1 8.5Z" fill="#fff" stroke="#cdcdcd" stroke-width="1.7"/><path d="M4.5 14H13.5" stroke="#cdcdcd" stroke-width="1.8"/></svg><svg style="position:absolute;left:129px;top:714px" width="18" height="24"><path d="M1 1H17V14.5L9 22L1 14.5Z" fill="#fff" stroke="#cdcdcd" stroke-width="1.7"/><path d="M4.5 9.5H13.5" stroke="#cdcdcd" stroke-width="1.8"/></svg><svg style="position:absolute;left:129px;top:962px" width="18" height="24"><path d="M1 22H17V8.5L9 1L1 8.5Z" fill="#fff" stroke="#cdcdcd" stroke-width="1.7"/><path d="M4.5 14H13.5" stroke="#cdcdcd" stroke-width="1.8"/></svg><div style="position:absolute;left:666px;top:701px;width:532px;height:41px;box-sizing:border-box;border:5px solid #e8522a;border-radius:12px"></div><div style="position:absolute;left:266px;top:743px;width:829px;height:172px;box-sizing:border-box;border:5px solid #e8522a;border-radius:12px"></div><div style="position:absolute;left:0;top:0;width:1498px;height:42px;background:#f2f2f2;border-bottom:2px solid #d0d0d0"></div><div style="position:absolute;left:0;top:0;width:346px;height:44px;background:#fff"></div><div style="position:absolute;left:0;top:38px;width:346px;height:6px;background:#4083c9"></div><svg style="position:absolute;left:18px;top:2px;overflow:visible" width="28" height="28"><use href="#cls" width="28" height="28"/></svg><div style="position:absolute;left:57px;top:0;height:34px;line-height:34px;font-size:24px;color:#0b33a0;will-change:transform;-webkit-text-stroke-width:0.15px">MemberController.java</div><svg style="position:absolute;left:314px;top:9px" width="16" height="16"><path d="M1 1L15 15M15 1L1 15" stroke="#b5b9bc" stroke-width="1.8"/></svg><svg style="position:absolute;left:362px;top:2px;overflow:visible" width="28" height="28"><use href="#app" width="28" height="28"/></svg><div style="position:absolute;left:401px;top:0;height:34px;line-height:34px;font-size:24px;color:#0b33a0;will-change:transform;-webkit-text-stroke-width:0.15px">ApplicationMember.java</div><svg style="position:absolute;left:672px;top:9px" width="16" height="16"><path d="M1 1L15 15M15 1L1 15" stroke="#b5b9bc" stroke-width="1.8"/></svg></div>
</body></html>
